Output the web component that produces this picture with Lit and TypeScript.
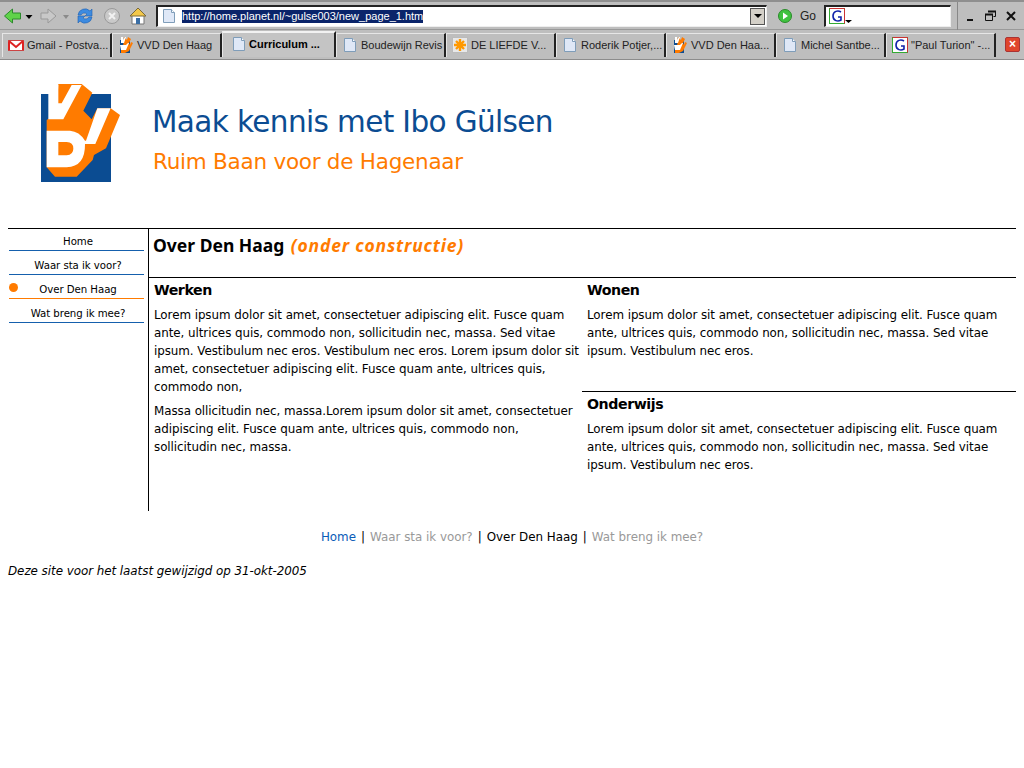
import { LitElement, html, css, svg } from "lit";
import { customElement } from "lit/decorators.js";

const docIcon = svg`<svg class="ic" width="16" height="16" viewBox="0 0 16 16"><path d="M2.500 1.500h8l3 3v10h-11z" fill="#dfe8f7" stroke="#7f9db9"/><path d="M10.500 1.500v3h3" fill="#fff" stroke="#7f9db9"/></svg>`;
const vvdIcon = svg`<svg class="ic" width="16" height="16" viewBox="0 0 16 16"><rect x="2" y="3" width="10" height="13" fill="#0b4c92"/><path d="M6 0l3 3 1-3 3 2-2 4 1 2 1-3 2 1-4 8-4 2H3v-4l2-2z" fill="#ff7b00"/><path d="M3 0h2v3l2-3h1L6 6H3zM2 8h6l2-2h1l-3 7H3z" fill="#fff"/></svg>`;
const gmailIcon = svg`<svg class="ic" width="16" height="16" viewBox="0 0 16 16"><rect x="0.500" y="3.500" width="15" height="10" fill="#fff" stroke="#c44"/><path d="M1 4l7 6 7-6M1 13V5M15 13V5" fill="none" stroke="#d22" stroke-width="2"/></svg>`;
const gIcon = svg`<svg class="ic" width="16" height="16" viewBox="0 0 16 16"><rect x="0.500" y="0.500" width="15" height="15" fill="#fff" stroke="#3a3"/><path d="M0.500 0.500h15v15" fill="none" stroke="#c33"/><path d="M12 4C9 2 4 3 4 8s5 6 8 4V9H9" fill="none" stroke="#12a" stroke-width="1.600"/></svg>`;
const flowerIcon = svg`<svg class="ic" width="16" height="16" viewBox="0 0 16 16"><rect x="0.500" y="0.500" width="15" height="15" fill="#e8e8e8" stroke="#bbb"/><path d="M8 2v12M2 8h12M4 4l8 8M12 4l-8 8" stroke="#f90" stroke-width="2.400"/></svg>`;

@customElement("app-root")
export class AppRoot extends LitElement {
  static styles = css`
    :host { display: block; width: 1024px; height: 768px; background: #fff; overflow: hidden; font-family: "DejaVu Sans", sans-serif; color: #000; }
    .chrome { height: 60px; background: #bebebe; border-bottom: 1px solid #8c8c8c; box-sizing: border-box; display: flex; flex-direction: column; font-family: "Liberation Sans", sans-serif; font-size: 11px; }
    .toolbar { height: 30px; flex: none; display: flex; align-items: center; box-sizing: border-box; border-bottom: 1px solid #999; border-top: 2px solid #8f8f8f; padding-left: 4px; }
    .nav { display: flex; align-items: center; width: 152px; flex: none; }
    .nav svg { display: block; flex: none; }
    .gap6 { margin-left: 6px; }
    .gap3 { margin-left: 3px; }
    .addr { flex: none; width: 611px; height: 22px; box-sizing: border-box; background: #fff; border: 1px solid #eee; border-top: 2px solid #222; border-left: 2px solid #222; display: flex; align-items: center; padding-left: 3px; gap: 5px; position: relative; font-size: 11px; }
    .url { background: #0a246a; color: #fff; line-height: 13px; }
    .drop { position: absolute; right: 1px; top: 1px; width: 15px; height: 17px; background: #d4d0c8; border: 1px solid #555; box-sizing: border-box; display: flex; align-items: center; justify-content: center; }
    .tri { width: 0; height: 0; border-left: 4px solid transparent; border-right: 4px solid transparent; border-top: 4px solid #000; }
    .go { flex: none; width: 57px; display: flex; align-items: center; gap: 8px; padding-left: 11px; box-sizing: border-box; font-size: 12px; color: #222; }
    .go svg, .search svg { flex: none; }
    .search { flex: none; width: 127px; height: 22px; box-sizing: border-box; background: #fff; border: 1px solid #eee; border-top: 2px solid #222; border-left: 2px solid #222; padding-left: 3px; display: flex; align-items: center; }
    .win { flex: 1; margin-left: 6px; height: 28px; border-left: 1px solid #888; display: flex; align-items: center; gap: 10px; padding-left: 7px; }
    .win svg { flex: none; display: block; }
    .tabs { height: 29px; flex: none; display: flex; align-items: flex-end; padding: 0 0 2px 2px; box-sizing: border-box; position: relative; }
    .tab { width: 110px; height: 24px; flex: none; box-sizing: border-box; display: flex; align-items: center; gap: 3px; padding: 0 0 2px 5px; border-top: 1px solid #e6e6e6; border-left: 1px solid #e6e6e6; border-right: 2px solid #222; white-space: nowrap; color: #222; font-size: 11px; }
    .tab.on { width: 114px; height: 26px; font-weight: 700; background: #c4c4c4; padding-left: 8px; gap: 2px; color: #000; border-top: 2px solid #f2f2f2; }
    .ic { flex: none; display: block; }
    .close { position: absolute; left: 1005px; top: 7px; width: 15px; height: 15px; background: #e0452c; border: 1px solid #a33; border-radius: 2px; box-sizing: border-box; color: #fff; font: 700 12px/13px "Liberation Sans", sans-serif; text-align: center; }

    .page { padding: 0 8px; }
    .head { height: 169px; display: flex; box-sizing: border-box; border-bottom: 1px solid #000; }
    .logo { flex: none; display: block; margin: 10px 0 0 12px; }
    .titles { margin-left: 12px; padding-top: 42px; }
    .t1 { font-size: 29.5px; line-height: 40px; color: #0b4c92; letter-spacing: -0.63px; white-space: nowrap; }
    .t2 { font-size: 21.5px; line-height: 30px; color: #ff7b00; margin-top: 5px; margin-left: 1px; letter-spacing: -0.25px; white-space: nowrap; }

    .main { display: flex; height: 282px; }
    .side { width: 140px; flex: none; border-right: 1px solid #000; font-size: 10.2px; letter-spacing: -0.05px; }
    .item { height: 24px; box-sizing: border-box; width: 135px; margin-left: 1px; padding: 5px 0 0 3px; border-bottom: 1px solid #1560ad; line-height: 19px; text-align: center; position: relative; white-space: nowrap; }
    .item:first-child { height: 22px; padding-top: 3px; }
    .item.on { border-bottom-color: #ff7b00; }
    .dot { position: absolute; left: 0; top: 8px; width: 9px; height: 9px; border-radius: 50%; background: #ff7b00; }
    .content { flex: 1; min-width: 0; }
    .h1box { height: 49px; border-bottom: 1px solid #000; box-sizing: border-box; padding: 4px 0 0 4px; font-family: "Noto Sans", sans-serif; font-size: 17.5px; line-height: 24px; font-weight: 700; letter-spacing: 0; white-space: nowrap; }
    .h1box em { color: #ff7b00; letter-spacing: 0.8px; margin-left: 2px; }
    .cols { display: flex; }
    .col { width: 433px; flex: none; box-sizing: border-box; }
    .pad { padding: 2px 0 0 5px; }
    .col h2 { margin: 0; font-size: 14.2px; line-height: 20px; font-weight: 700; letter-spacing: -0.45px; }
    .col p { margin: 6px 0 0; font-size: 11.9px; line-height: 18px; letter-spacing: -0.06px; }
    .col p + p { margin-top: 6px; }
    .right { width: 434px; }
    .wonen { height: 114px; border-bottom: 1px solid #000; box-sizing: border-box; padding: 2px 5px 0; }
    .ond { padding: 2px 5px 0; }

    .foot { text-align: center; font-size: 11.9px; line-height: 18px; margin-top: 17px; letter-spacing: -0.02px; }
    .foot i { font-style: normal; margin: 0 1.3px; }
    .foot .b { color: #0a5cb8; }
    .foot .g { color: #999; }
    .date { font-style: italic; font-size: 11.9px; line-height: 18px; margin-top: 16px; letter-spacing: -0.04px; }
  `;

  render() {
    const lorem = "Lorem ipsum dolor sit amet, consectetuer adipiscing elit. Fusce quam ante, ultrices quis, commodo non, sollicitudin nec, massa. Sed vitae ipsum. Vestibulum nec eros.";
    return html`
      <div class="chrome">
        <div class="toolbar">
          <div class="nav">
            <svg width="21" height="20" viewBox="0 0 21 20"><path d="M0.500 10l8-7v4h8v6h-8v4z" fill="#5fd34a" stroke="#2c8a2c"/></svg>
            <svg width="8" height="20" viewBox="0 0 8 20"><path d="M0.500 9h7l-3.500 4z" fill="#000"/></svg>
            <svg class="gap6" width="18" height="20" viewBox="0 0 18 20"><path d="M17 10l-8-7v4H2v6h7v4z" fill="#c8c8c8" stroke="#999"/></svg>
            <svg width="14" height="20" viewBox="0 0 14 20"><path d="M6 9h6l-3 4z" fill="#8a8a8a"/></svg>
            <svg class="gap3" width="22" height="20" viewBox="0 0 22 20"><path d="M4 9a7 7 0 0 1 12-4l2-2v7h-7l2-2a4 4 0 0 0-6 1zM18 11a7 7 0 0 1-12 4l-2 2v-7h7l-2 2a4 4 0 0 0 6-1z" fill="#3d8be0" stroke="#1f5fb0" stroke-width=".6"/></svg>
            <svg class="gap3" width="26" height="20" viewBox="0 0 26 20"><circle cx="13" cy="10" r="7.500" fill="#c9c9c9" stroke="#9a9a9a"/><path d="M10 7l6 6M16 7l-6 6" stroke="#f2f2f2" stroke-width="2"/></svg>
            <svg class="gap3" width="20" height="20" viewBox="0 0 20 20"><path d="M4 10v8h12v-8" fill="#fff" stroke="#777"/><path d="M2 10l8-8 8 8z" fill="#f3c84a" stroke="#7a6a3a"/><rect x="8" y="12" width="4" height="6" fill="#3a6ea5"/></svg>
          </div>
          <div class="addr">
            ${docIcon}
            <span class="url">http://home.planet.nl/~gulse003/new_page_1.htm</span>
            <div class="drop"><div class="tri"></div></div>
          </div>
          <div class="go">
            <svg width="14" height="14" viewBox="0 0 14 14"><circle cx="7" cy="7" r="6.500" fill="#3fc23f" stroke="#2a8a2a"/><path d="M5 3.500l5 3.500-5 3.500z" fill="#fff"/></svg>
            <span>Go</span>
          </div>
          <div class="search">${gIcon}<svg width="8" height="16" viewBox="0 0 8 16"><path d="M0 12h7l-3.500 3z" fill="#000"/></svg></div>
          <div class="win">
            <svg width="10" height="12" viewBox="0 0 10 12"><rect x="2" y="9" width="6" height="2" fill="#111"/></svg>
            <svg width="11" height="12" viewBox="0 0 11 12"><path d="M3.500 1.500h7v5h-2M0.500 4.500h7v6h-7z" fill="none" stroke="#111"/><path d="M3 1.500h8M0 4.500h8" stroke="#111" stroke-width="2"/></svg>
            <svg width="10" height="12" viewBox="0 0 10 12"><path d="M1 2l8 8M9 2l-8 8" stroke="#111" stroke-width="2"/></svg>
          </div>
        </div>
        <div class="tabs">
          <div class="tab">${gmailIcon}<span>Gmail - Postva...</span></div>
          <div class="tab">${vvdIcon}<span>VVD Den Haag</span></div>
          <div class="tab on">${docIcon}<span>Curriculum ...</span></div>
          <div class="tab">${docIcon}<span>Boudewijn Revis</span></div>
          <div class="tab">${flowerIcon}<span>DE LIEFDE V...</span></div>
          <div class="tab">${docIcon}<span>Roderik Potjer,...</span></div>
          <div class="tab">${vvdIcon}<span>VVD Den Haa...</span></div>
          <div class="tab">${docIcon}<span>Michel Santbe...</span></div>
          <div class="tab">${gIcon}<span>"Paul Turion" -...</span></div>
          <div class="close">×</div>
        </div>
      </div>
      <div class="page">
        <div class="head">
          <svg class="logo" width="120" height="120" viewBox="0 0 360 360">
            <rect x="63" y="72" width="210" height="264" fill="#0b4c92"/>
            <path d="M115 42L185 42L217 68L190 122L215 148L232 115L272 115L300 135L258 235L222 255L218 270L170 320L105 320L80 292L80 150L110 130Z" fill="#ff7b00"/>
            <path d="M85 45H115V100H125L155 45H185L130 148H85Z" fill="#fff"/>
            <path d="M80 182H150Q178 184 195 212H198L232 115H272L226 222H195Q196 290 140 292H80ZM115 216V256H140Q160 254 160 236Q160 216 140 216Z" fill="#fff" fill-rule="evenodd"/>
          </svg>
          <div class="titles">
            <div class="t1">Maak kennis met Ibo Gülsen</div>
            <div class="t2">Ruim Baan voor de Hagenaar</div>
          </div>
        </div>
        <div class="main">
          <div class="side">
            <div class="item">Home</div>
            <div class="item">Waar sta ik voor?</div>
            <div class="item on"><span class="dot"></span>Over Den Haag</div>
            <div class="item">Wat breng ik mee?</div>
          </div>
          <div class="content">
            <div class="h1box">Over Den Haag <em>(onder constructie)</em></div>
            <div class="cols">
              <div class="col pad">
                <h2>Werken</h2>
                <p>Lorem ipsum dolor sit amet, consectetuer adipiscing elit. Fusce quam ante, ultrices quis, commodo non, sollicitudin nec, massa. Sed vitae ipsum. Vestibulum nec eros. Vestibulum nec eros. Lorem ipsum dolor sit amet, consectetuer adipiscing elit. Fusce quam ante, ultrices quis, commodo non,</p>
                <p>Massa ollicitudin nec, massa.Lorem ipsum dolor sit amet, consectetuer adipiscing elit. Fusce quam ante, ultrices quis, commodo non, sollicitudin nec, massa.</p>
              </div>
              <div class="col right">
                <div class="wonen"><h2>Wonen</h2><p>${lorem}</p></div>
                <div class="ond"><h2>Onderwijs</h2><p>${lorem}</p></div>
              </div>
            </div>
          </div>
        </div>
        <div class="foot"><span class="b">Home</span> <i>|</i> <span class="g">Waar sta ik voor?</span> <i>|</i> Over Den Haag <i>|</i> <span class="g">Wat breng ik mee?</span></div>
        <div class="date">Deze site voor het laatst gewijzigd op 31-okt-2005</div>
      </div>
    `;
  }
}
